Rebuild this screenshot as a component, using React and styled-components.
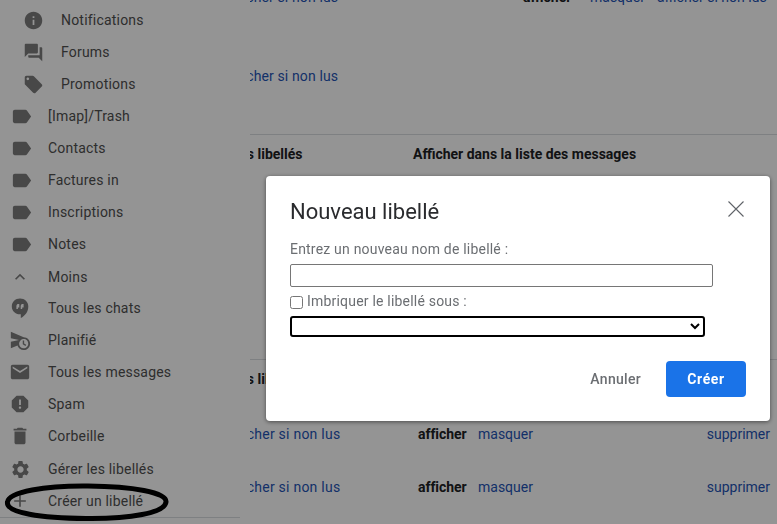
import React from "react";
import styled, { createGlobalStyle } from "styled-components";
import {
  MdInfo, MdQuestionAnswer, MdLocalOffer, MdLabel, MdExpandLess, MdScheduleSend,
  MdEmail, MdReport, MdDelete, MdSettings, MdAdd,
} from "react-icons/md";

const Global = createGlobalStyle`
  html, body { margin: 0; padding: 0; height: 100%; background: #fff; overflow: hidden; }
  body { font-family: Roboto, "Liberation Sans", sans-serif; font-size: 14px; color: #202124; }
`;

const Page = styled.div`
  display: flex;
  width: 777px;
  height: 524px;
  overflow: hidden;
`;

const Sidebar = styled.nav`
  width: 250px;
  flex: none;
  padding-top: 4px;
  display: flex;
  flex-direction: column;
  box-sizing: border-box;
`;

const NavRow = styled.div`
  height: 32px;
  flex: none;
  box-sizing: border-box;
  display: flex;
  align-items: center;
  padding-left: ${(p) => p.$pad}px;
  padding-top: ${(p) => (p.$low ? 2 : 0)}px;
  color: #505050;
  letter-spacing: 0.2px;
`;

const NavIcon = styled.span`
  width: 20px;
  height: 20px;
  flex: none;
  display: flex;
  align-items: center;
  justify-content: center;
  color: #7c7c7c;
  margin-right: ${(p) => 48 - 20 - p.$pad + (p.$sub ? 13 : 0)}px;
  svg { flex: none; display: block; }
`;

const SideRule = styled.div`
  width: 240px;
  height: 1px;
  background: #dadce0;
  margin-top: 1px;
`;

const Main = styled.main`
  flex: 1;
  min-width: 0;
  overflow: hidden;
  display: flex;
  flex-direction: column;
`;

const Section = styled.section`
  flex: none;
  height: ${(p) => p.$h}px;
  border-bottom: ${(p) => (p.$rule ? "1px solid #dadce0" : "none")};
  box-sizing: border-box;
`;

const Row = styled.div`
  height: ${(p) => p.$h || 20}px;
  margin-top: ${(p) => p.$top || 0}px;
  display: grid;
  grid-template-columns: 168px 60px 1fr auto;
  align-items: center;
  white-space: nowrap;
`;

const TopRow = styled(Row)`
  grid-template-columns: 273px 67px 67px 1fr;
`;

const Link = styled.a`
  color: #1f54b5;
  text-decoration: none;
`;

const NameLink = styled(Link)`
  margin-left: -25px;
  letter-spacing: ${(p) => (p.$wide ? 0.24 : 0.12)}px;
`;

const Strong = styled.b`
  font-weight: 700;
  color: #202124;
`;

const HeadName = styled(Strong)`
  margin-left: -71px;
`;

const HeadShow = styled(Strong)`
  margin-left: -5px;
  grid-column: 2 / 5;
`;

const Show = styled(Strong)`
  letter-spacing: -0.05px;
`;

const Delete = styled(Link)`
  margin-right: 7px;
`;

const Scrim = styled.div`
  position: fixed;
  inset: 0;
  background: rgba(0, 0, 0, 0.42);
`;

const Ellipse = styled.svg`
  position: fixed;
  left: 0;
  top: 480px;
  width: 180px;
  height: 44px;
`;

const Dialog = styled.div`
  position: fixed;
  left: 266px;
  top: 176px;
  width: 504px;
  height: 245px;
  box-sizing: border-box;
  background: #fff;
  border-radius: 4px;
  box-shadow: 0 1px 4px rgba(0, 0, 0, 0.5);
  padding: 24px 24px 24px;
  display: flex;
  flex-direction: column;
`;

const Title = styled.h2`
  margin: 0;
  font: 400 22px/24px Roboto, sans-serif;
  color: #2a2b2e;
`;

const Close = styled.button`
  position: absolute;
  left: 462px;
  top: 25px;
  width: 16px;
  height: 16px;
  padding: 0;
  border: 0;
  background: none;
  color: #5f6368;
  svg { display: block; }
`;

const FieldLabel = styled.label`
  display: block;
  margin-top: 15px;
  font-size: 14px;
  line-height: 20px;
  color: #6b6e72;
  letter-spacing: 0.2px;
`;

const NameInput = styled.input`
  display: block;
  box-sizing: border-box;
  width: 423px;
  height: 23px;
  margin: 5px 0 0;
  padding: 0 3px;
  border: 1px solid #767676;
  border-radius: 2px;
  background: #fff;
  outline: none;
`;

const NestRow = styled.label`
  display: flex;
  align-items: center;
  margin-top: 5px;
  height: 18px;
  color: #6b6e72;
  letter-spacing: 0.2px;
`;

const Check = styled.input`
  width: 13px;
  height: 13px;
  margin: 2px 4px 0 0;
`;

const ParentSelect = styled.select`
  display: block;
  box-sizing: border-box;
  width: 415px;
  height: 21px;
  margin-top: 6px;
  padding: 0;
  border: 2px solid #000;
  border-radius: 3px;
  background: #fff;
  outline: none;
`;

const Actions = styled.div`
  margin-top: auto;
  display: flex;
  justify-content: flex-end;
  align-items: center;
  gap: 25px;
`;

const Cancel = styled.button`
  border: 0;
  background: none;
  padding: 0;
  font: 500 14px Roboto, sans-serif;
  color: #6b6e72;
  letter-spacing: 0.3px;
`;

const Create = styled.button`
  width: 80px;
  height: 36px;
  border: 0;
  border-radius: 4px;
  background: #1a73e8;
  color: #fff;
  font: 700 14px Roboto, sans-serif;
  letter-spacing: 0.6px;
`;

const Chat = () => (
  <svg width="18" height="20" viewBox="0 0 18 20" fill="currentColor">
    <path fillRule="evenodd" d="M9 0.500C4.300 0.500 0.800 4 0.800 8.500S4.300 16.300 9 16.300h0.800V20c4.200-2 7.500-6.300 7.500-11.500C17.300 4 13.700 0.500 9 0.500zM8.300 9.600L6.900 9.600V11H5.400V8.400C5.400 7.200 6 6.300 6.900 6H8.300zM12.600 9.600L11.200 9.600V11H9.700V8.400c0-1.200.6-2.100 1.500-2.400h1.400z" />
  </svg>
);

const items = [
  { t: "Notifications", I: MdInfo, s: 21, sub: true, pad: 23 },
  { t: "Forums", I: MdQuestionAnswer, s: 21, sub: true, pad: 23 },
  { t: "Promotions", I: MdLocalOffer, s: 21, sub: true, pad: 23 },
  { t: "[Imap]/Trash", I: MdLabel, s: 23, pad: 11 },
  { t: "Contacts", I: MdLabel, s: 23, pad: 11 },
  { t: "Factures in", I: MdLabel, s: 23, pad: 11 },
  { t: "Inscriptions", I: MdLabel, s: 23, pad: 11 },
  { t: "Notes", I: MdLabel, s: 23, pad: 11 },
  { t: "Moins", I: MdExpandLess, s: 20, pad: 10, low: true },
  { t: "Tous les chats", I: Chat, pad: 10 },
  { t: "Planifié", I: MdScheduleSend, s: 22, pad: 10 },
  { t: "Tous les messages", I: MdEmail, s: 22, pad: 10 },
  { t: "Spam", I: MdReport, s: 22, pad: 10 },
  { t: "Corbeille", I: MdDelete, s: 22, pad: 10 },
  { t: "Gérer les libellés", I: MdSettings, s: 21, pad: 10, low: true },
  { t: "Créer un libellé", I: MdAdd, s: 20, pad: 10, low: true },
];

const LabelRow = ({ top }) => (
  <Row $top={top}>
    <NameLink $wide>afficher si non lus</NameLink>
    <Show>afficher</Show>
    <Link>masquer</Link>
    <Delete>supprimer</Delete>
  </Row>
);

export default function App() {
  return (
    <Page>
      <Global />
      <Sidebar>
        {items.map(({ t, I, s, sub, pad, low }) => (
          <NavRow key={t} $pad={pad} $low={low}>
            <NavIcon $sub={sub} $pad={pad}><I size={s} /></NavIcon>
            {t}
          </NavRow>
        ))}
        <SideRule />
      </Sidebar>
      <Main>
        <Section $h={135} $rule>
          <TopRow $h={20} $top={-13}>
            <NameLink>afficher si non lus</NameLink>
            <Strong>afficher</Strong>
            <Link>masquer</Link>
            <Link>afficher si non lus</Link>
          </TopRow>
          <Row $top={59}>
            <NameLink>afficher si non lus</NameLink>
          </Row>
        </Section>
        <Section $h={225} $rule>
          <Row $top={9}>
            <HeadName>Libellés des libellés</HeadName>
            <HeadShow>Afficher dans la liste des messages</HeadShow>
          </Row>
        </Section>
        <Section $h={164}>
          <Row $top={9}>
            <HeadName>Libellés des libellés</HeadName>
          </Row>
          <LabelRow top={35} />
          <LabelRow top={33} />
        </Section>
      </Main>
      <Scrim />
      <Ellipse viewBox="0 0 180 44" fill="none">
        <path d="M7.500 22C9 12 45 5.500 88 6C132 6.500 167 12 166 22C165 33 130 39 86 38.500C42 38 5.500 33 7.500 22Z" stroke="#000" strokeWidth="5" />
      </Ellipse>
      <Dialog>
        <Title>Nouveau libellé</Title>
        <Close aria-label="Fermer">
          <svg width="16" height="16" viewBox="0 0 16 16" stroke="currentColor" strokeWidth="1.100" fill="none">
            <path d="M0.500 0.500L15.500 15.500M15.500 0.500L0.500 15.500" />
          </svg>
        </Close>
        <FieldLabel htmlFor="name">Entrez un nouveau nom de libellé :</FieldLabel>
        <NameInput id="name" />
        <NestRow>
          <Check type="checkbox" />
          Imbriquer le libellé sous :
        </NestRow>
        <ParentSelect><option></option></ParentSelect>
        <Actions>
          <Cancel>Annuler</Cancel>
          <Create>Créer</Create>
        </Actions>
      </Dialog>
    </Page>
  );
}
